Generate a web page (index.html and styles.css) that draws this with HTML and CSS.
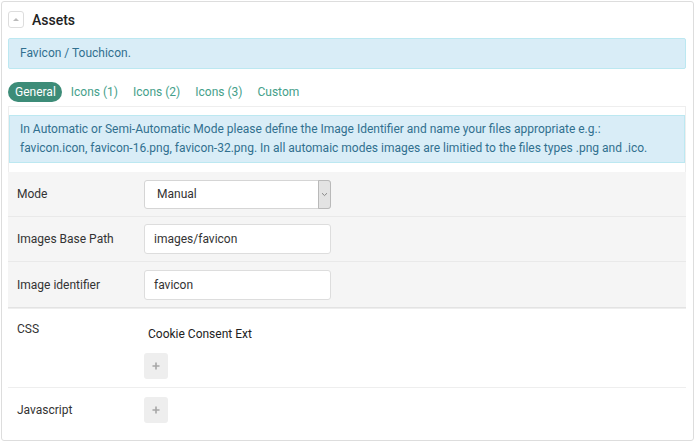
FILE: index.html
```html
<!DOCTYPE html>
<html>
<head>
<meta charset="utf-8">
<link rel="stylesheet" href="styles.css">
</head>
<body>
<div class="panel">
  <div class="panel-head">
    <span class="toggle"><span class="tri"></span></span>
    <span class="title">Assets</span>
  </div>
  <div class="alert alert-top">Favicon / Touchicon.</div>
  <ul class="tabs">
    <li class="tab active">General</li>
    <li class="tab">Icons (1)</li>
    <li class="tab">Icons (2)</li>
    <li class="tab">Icons (3)</li>
    <li class="tab">Custom</li>
  </ul>
  <div class="tab-pane">
    <div class="alert alert-pane">In Automatic or Semi-Automatic Mode please define the Image Identifier and name your files appropriate e.g.:<br>favicon.icon, favicon-16.png, favicon-32.png. In all automaic modes images are limitied to the files types .png and .ico.</div>
    <div class="well">
      <div class="form-row">
        <label class="lbl">Mode</label>
        <div class="select">
          <span class="select-val">Manual</span>
          <span class="select-arrow"><svg width="7" height="5" viewBox="0 0 7 5"><path d="M1 1.2 L3.5 3.6 L6 1.2" fill="none" stroke="#888" stroke-width="1"/></svg></span>
        </div>
      </div>
      <div class="form-row">
        <label class="lbl">Images Base Path</label>
        <div class="input">images/favicon</div>
      </div>
      <div class="form-row">
        <label class="lbl">Image identifier</label>
        <div class="input">favicon</div>
      </div>
    </div>
  </div>
  <div class="list-row css-row">
    <div class="lbl">CSS</div>
    <div class="list-col">
      <div class="list-item">Cookie Consent Ext</div>
      <span class="add-btn"><svg width="8" height="8" viewBox="0 0 8 8"><path d="M4 0.5 V7.5 M0.5 4 H7.5" stroke="#a6a6a6" stroke-width="1.6"/></svg></span>
    </div>
  </div>
  <div class="list-row js-row">
    <div class="lbl">Javascript</div>
    <div class="list-col">
      <span class="add-btn"><svg width="8" height="8" viewBox="0 0 8 8"><path d="M4 0.5 V7.5 M0.5 4 H7.5" stroke="#a6a6a6" stroke-width="1.6"/></svg></span>
    </div>
  </div>
</div>
</body>
</html>
```
FILE: styles.css
```css
* { box-sizing: border-box; }
html, body { margin: 0; padding: 0; background: #fff; }
body {
  padding: 1px 0 0 1px;
  font-family: Roboto, "Liberation Sans", Arial, sans-serif;
  font-size: 12px;
  color: #333;
}
.panel {
  width: 693px;
  height: 440px;
  border: 1px solid #ddd;
  border-radius: 3px;
  padding: 9px 7px 0 6px;
}
.panel-head {
  display: flex;
  align-items: center;
  height: 17px;
}
.toggle {
  width: 16px;
  height: 17px;
  border: 1px solid #ddd;
  border-radius: 3px;
  background: #fff;
  display: flex;
  align-items: center;
  justify-content: center;
}
.tri {
  width: 0;
  height: 0;
  border-left: 3px solid transparent;
  border-right: 3px solid transparent;
  border-bottom: 3px solid #bbb;
}
.title {
  margin-left: 8px;
  font-size: 14px;
  font-weight: 500;
  color: #222;
}
.alert {
  background: #d9edf7;
  border: 1px solid #bce8f1;
  color: #31708f;
  border-radius: 2px;
}
.alert-top {
  margin-top: 10px;
  padding: 6px 11px;
  line-height: 17px;
}
.tabs {
  list-style: none;
  margin: 13px 0 0 0;
  padding: 0;
  display: flex;
  gap: 1px;
}
.tab {
  padding: 2px 7px 2px 7px;
  line-height: 16px;
  color: #45a08a;
  border-radius: 10px;
}
.tab.active {
  background: #3d8c78;
  color: #fff;
  padding-right: 6px;
  margin-right: 1px;
}
.tab-pane {
  margin-top: 4px;
  border: 1px solid #eee;
  border-bottom: none;
  padding-top: 8px;
}
.alert-pane {
  padding: 4px 10px;
  line-height: 19px;
  border-radius: 0;
}
.well {
  margin: 9px -1px 0 -1px;
  background: #f5f5f5;
  border-bottom: 1px solid #e3e3e3;
  box-shadow: 0 1px 0 #eee;
}
.form-row {
  display: flex;
  align-items: center;
  padding: 7px 0 7px 9px;
  height: 45px;
  border-bottom: 1px solid #e9e9e9;
}
.form-row:last-child { border-bottom: none; height: 45px; }
.lbl {
  width: 127px;
  flex: none;
  color: #333;
}
.input, .select {
  width: 187px;
  height: 30px;
  background: #fff;
  border: 1px solid #ddd;
  border-radius: 3px;
  display: flex;
  align-items: center;
  padding-left: 9px;
  color: #333;
}
.select {
  height: 29px;
  border-color: #d5d5d5;
  padding-left: 12px;
  justify-content: space-between;
  padding-right: 0;
}
.select-arrow {
  width: 13px;
  height: 29px;
  margin: -1px -1px -1px 0;
  background: #e3e3e3;
  border: 1px solid #b9b9b9;
  border-radius: 0 3px 3px 0;
  display: flex;
  align-items: center;
  justify-content: center;
}
.list-row {
  display: flex;
  padding-left: 9px;
  margin-left: 0;
}
.css-row {
  padding-top: 12px;
  padding-bottom: 8px;
  border-bottom: 1px solid #eee;
  align-items: flex-start;
}
.css-row .lbl { line-height: 18px; }
.js-row {
  padding-top: 9px;
  align-items: center;
}
.list-col {
  display: flex;
  flex-direction: column;
  align-items: flex-start;
}
.list-item {
  margin-top: 5px;
  padding-left: 4px;
  line-height: 18px;
  color: #222;
}
.css-row .add-btn { margin-top: 10px; }
.add-btn {
  width: 24px;
  height: 26px;
  background: #eee;
  border-radius: 3px;
  display: flex;
  align-items: center;
  justify-content: center;
}
```
